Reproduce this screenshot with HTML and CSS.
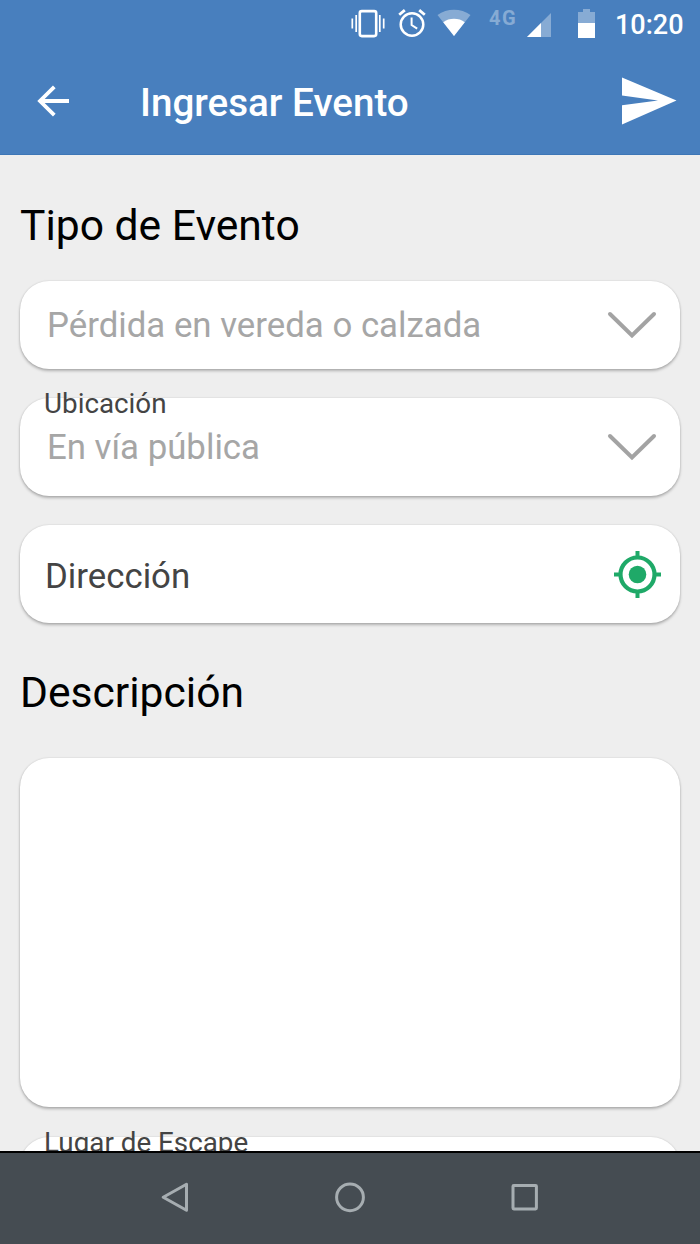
FILE: index.html
```html
<!DOCTYPE html>
<html lang="es">

<head>
    <meta charset="UTF-8">
    <meta name="viewport" content="width=device-width, initial-scale=1.0">
    <title>Ingresar Evento</title>
    <link rel="stylesheet" href="styles.css">
</head>

<body>

    <!-- Barra de estado -->
    <div class="status-bar">
        <svg class="icon-vibrate" width="34" height="30" viewBox="0 0 34 30" fill="none" stroke="#fff">
            <rect x="8.8" y="2.1" width="16.4" height="25" rx="2" stroke-width="2.6"/>
            <path d="M5.2 6v17M1.3 9.500v10M28.8 6v17M32.7 9.500v10" stroke-width="1.7"/>
        </svg>
        <svg class="icon-alarm" width="28" height="30" viewBox="0 0 28 30" fill="none" stroke="#fff">
            <circle cx="14" cy="16.500" r="11.300" stroke-width="2.500"/>
            <path d="M13.600 9.500v7.500l5.600 3.600" stroke-width="2"/>
            <path d="M1.200 6.800l5.600-4.700M26.800 6.800l-5.600-4.700" stroke-width="2.800"/>
        </svg>
        <svg class="icon-wifi" width="34" height="28" viewBox="0 0 34 28">
            <path d="M.5 6C10-1 24-1 33.500 6L17 27z" fill="#fff" fill-opacity=".35"/>
            <path d="M6.200 13.200C12 8.700 22 8.700 27.800 13.200L17 27z" fill="#fff"/>
        </svg>
        <span class="network">4G</span>
        <svg class="icon-signal" width="25" height="25" viewBox="0 0 25 25">
            <path d="M24 0v24H0z" fill="#fff" fill-opacity=".35"/>
            <path d="M14 10v14H0z" fill="#fff"/>
        </svg>
        <svg class="icon-battery" width="17" height="29" viewBox="0 0 17 29">
            <path d="M5 0h7v3h5v11H0V3h5z" fill="#fff" fill-opacity=".35"/>
            <path d="M0 14h17v15H0z" fill="#fff"/>
        </svg>
        <span class="time">10:20</span>
    </div>

    <header class="toolbar">
        <svg class="icon-back" width="33" height="32" viewBox="0 0 33 32" fill="none" stroke="#fff" stroke-width="3.800">
            <path d="M32 16H3M17.300 1.800L3 16l14.300 14.200"/>
        </svg>
        <h1>Ingresar Evento</h1>
        <svg class="icon-send" width="55" height="48" viewBox="0 0 55 48">
            <path d="M0 .5L54.500 23.500 0 47.500V28.200L36 23.500 0 18.500z" fill="#fff"/>
        </svg>
    </header>

    <!-- Formulario -->
    <main class="form">
        <h2 class="tipo">Tipo de Evento</h2>
        <div class="card card-short">
            <span class="value">Pérdida en vereda o calzada</span>
            <svg class="chevron" width="50" height="28" viewBox="0 0 50 28">
                <path d="M3 3l22 21.500L47 3"/>
            </svg>
        </div>
        <div class="card">
            <label class="float-label">Ubicación</label>
            <span class="value">En vía pública</span>
            <svg class="chevron" width="50" height="28" viewBox="0 0 50 28">
                <path d="M3 3l22 21.500L47 3"/>
            </svg>
        </div>
        <div class="card">
            <span class="placeholder">Dirección</span>
            <svg class="icon-gps" width="47" height="47" viewBox="0 0 47 47" fill="none" stroke="#1fa968">
                <circle cx="23.500" cy="23.500" r="17" stroke-width="4.200"/>
                <circle cx="23.500" cy="23.500" r="8.800" fill="#1fa968" stroke="none"/>
                <path d="M23.500 0v7M23.500 40v7M0 23.500h7M40 23.500h7" stroke-width="4"/>
            </svg>
        </div>
        <h2 class="descripcion">Descripción</h2>
        <div class="card card-text"></div>
        <div class="card">
            <label class="float-label">Lugar de Escape</label>
        </div>
    </main>

    <!-- Botones de navegación -->
    <nav class="nav-bar">
        <svg width="30" height="32" viewBox="0 0 30 32">
            <path d="M25.500 3.300v26L2.200 16.300z"/>
        </svg>
        <svg width="32" height="32" viewBox="0 0 32 32">
            <circle cx="16" cy="16.300" r="13.400"/>
        </svg>
        <svg width="32" height="32" viewBox="0 0 32 32">
            <rect x="4" y="4.500" width="23.400" height="23.400" rx=".8"/>
        </svg>
    </nav>

</body>

</html>
```
FILE: styles.css
```css
* {
    box-sizing: border-box;
}

body {
    display: flex;
    flex-direction: column;
    height: 1244px;
    margin: 0;
    overflow: hidden;
    font-family: Roboto, sans-serif;
    background-color: #eee;
}

/* Barra de estado */
.status-bar {
    display: flex;
    flex: none;
    align-items: flex-start;
    height: 48px;
    padding-left: 351px;
    background-color: #487fbe;
    color: #fff;
}

.icon-vibrate {
    margin-top: 9px;
}

.icon-alarm {
    margin: 8px 0 0 13px;
}

.icon-wifi {
    margin: 9px 0 0 11px;
}

.network {
    width: 30px;
    margin: 7px 0 0 18px;
    font-size: 20px;
    font-weight: 700;
    line-height: 22px;
    letter-spacing: 1.5px;
    color: rgba(255, 255, 255, 0.35);
}

.icon-signal {
    margin: 13px 0 0 8px;
}

.icon-battery {
    margin: 9px 0 0 26px;
}

.time {
    margin: 9px 0 0 20px;
    font-size: 27px;
    font-weight: 500;
    line-height: 32px;
}

/* Encabezado */
.toolbar {
    display: flex;
    flex: none;
    align-items: center;
    height: 107px;
    padding: 0 23px 0 37px;
    background-color: #487fbe;
    border-bottom: 1px solid #3d76b6;
    color: #fff;
}

.toolbar h1 {
    flex: 1;
    margin: 4px 0 0 70px;
    font-size: 38.6px;
    font-weight: 500;
    line-height: 44px;
}

/* Formulario */
.form {
    flex: 1;
    min-height: 0;
    padding: 0 20px;
    overflow: hidden;
}

.form h2 {
    margin: 0;
    font-size: 42.6px;
    font-weight: 400;
    line-height: 50px;
    color: #000;
}

.form .tipo {
    padding: 45px 0 31px;
}

.form .descripcion {
    padding: 15px 0 41px;
}

.card {
    position: relative;
    display: flex;
    align-items: center;
    justify-content: space-between;
    height: 98px;
    margin-bottom: 29px;
    padding: 0 19px 0 27px;
    border-radius: 29px;
    background-color: #fff;
    box-shadow: 0 2px 3px rgba(0, 0, 0, 0.26), 0 0 2px rgba(0, 0, 0, 0.14);
}

.card-short {
    height: 88px;
}

.card-text {
    height: 349px;
    margin-bottom: 30px;
}

.value {
    font-size: 34.8px;
    color: #a6a6a6;
}

.placeholder {
    margin: 3px 0 0 -2px;
    font-size: 34.8px;
    color: #444;
}

/* Etiqueta sobre el borde de la tarjeta */
.float-label {
    position: absolute;
    top: -10px;
    left: 24px;
    font-size: 27.8px;
    line-height: 32px;
    color: #444;
}

.chevron {
    margin-right: 4px;
    fill: none;
    stroke: #a3a3a3;
    stroke-width: 4;
    stroke-linecap: round;
}

/* Barra de navegación */
.nav-bar {
    display: flex;
    flex: none;
    align-items: center;
    justify-content: center;
    gap: 143px;
    height: 93px;
    padding: 0 0 3px 2px;
    border-top: 2px solid #000;
    background-color: #454c52;
}

.nav-bar svg {
    fill: none;
    stroke: #a6adb1;
    stroke-width: 3;
    stroke-linejoin: round;
}
```
